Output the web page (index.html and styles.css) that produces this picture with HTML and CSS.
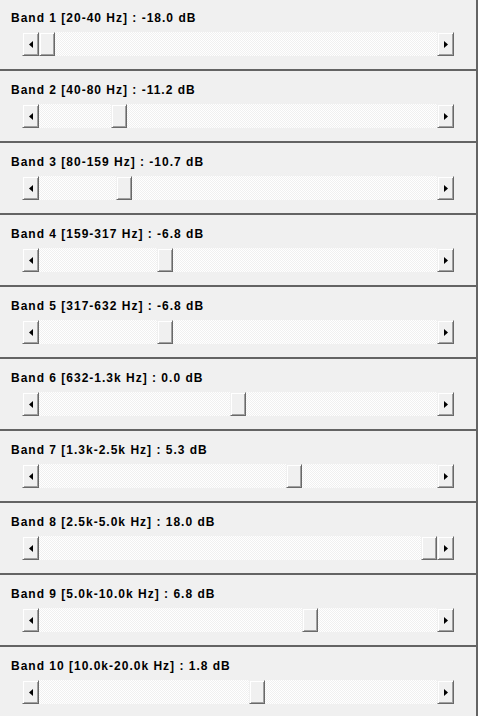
FILE: index.html
```html
<!DOCTYPE html>
<html>
<head>
<meta charset="utf-8">
<link rel="stylesheet" href="styles.css">
</head>
<body>
<div class="panel">
  <div class="band"><div class="label">Band 1 [20-40 Hz] : -18.0 dB</div><div class="sb"><div class="btn"><svg width="4" height="7" viewBox="0 0 4 7"><polygon points="4,0 4,7 0,3.5" fill="#000"/></svg></div><div class="track"><div class="thumb" style="margin-left:0px"></div></div><div class="btn"><svg width="4" height="7" viewBox="0 0 4 7"><polygon points="0,0 0,7 4,3.5" fill="#000"/></svg></div></div></div>
  <div class="band"><div class="label">Band 2 [40-80 Hz] : -11.2 dB</div><div class="sb"><div class="btn"><svg width="4" height="7" viewBox="0 0 4 7"><polygon points="4,0 4,7 0,3.5" fill="#000"/></svg></div><div class="track"><div class="thumb" style="margin-left:72px"></div></div><div class="btn"><svg width="4" height="7" viewBox="0 0 4 7"><polygon points="0,0 0,7 4,3.5" fill="#000"/></svg></div></div></div>
  <div class="band"><div class="label">Band 3 [80-159 Hz] : -10.7 dB</div><div class="sb"><div class="btn"><svg width="4" height="7" viewBox="0 0 4 7"><polygon points="4,0 4,7 0,3.5" fill="#000"/></svg></div><div class="track"><div class="thumb" style="margin-left:77px"></div></div><div class="btn"><svg width="4" height="7" viewBox="0 0 4 7"><polygon points="0,0 0,7 4,3.5" fill="#000"/></svg></div></div></div>
  <div class="band"><div class="label">Band 4 [159-317 Hz] : -6.8 dB</div><div class="sb"><div class="btn"><svg width="4" height="7" viewBox="0 0 4 7"><polygon points="4,0 4,7 0,3.5" fill="#000"/></svg></div><div class="track"><div class="thumb" style="margin-left:118px"></div></div><div class="btn"><svg width="4" height="7" viewBox="0 0 4 7"><polygon points="0,0 0,7 4,3.5" fill="#000"/></svg></div></div></div>
  <div class="band"><div class="label">Band 5 [317-632 Hz] : -6.8 dB</div><div class="sb"><div class="btn"><svg width="4" height="7" viewBox="0 0 4 7"><polygon points="4,0 4,7 0,3.5" fill="#000"/></svg></div><div class="track"><div class="thumb" style="margin-left:118px"></div></div><div class="btn"><svg width="4" height="7" viewBox="0 0 4 7"><polygon points="0,0 0,7 4,3.5" fill="#000"/></svg></div></div></div>
  <div class="band"><div class="label">Band 6 [632-1.3k Hz] : 0.0 dB</div><div class="sb"><div class="btn"><svg width="4" height="7" viewBox="0 0 4 7"><polygon points="4,0 4,7 0,3.5" fill="#000"/></svg></div><div class="track"><div class="thumb" style="margin-left:191px"></div></div><div class="btn"><svg width="4" height="7" viewBox="0 0 4 7"><polygon points="0,0 0,7 4,3.5" fill="#000"/></svg></div></div></div>
  <div class="band"><div class="label">Band 7 [1.3k-2.5k Hz] : 5.3 dB</div><div class="sb"><div class="btn"><svg width="4" height="7" viewBox="0 0 4 7"><polygon points="4,0 4,7 0,3.5" fill="#000"/></svg></div><div class="track"><div class="thumb" style="margin-left:247px"></div></div><div class="btn"><svg width="4" height="7" viewBox="0 0 4 7"><polygon points="0,0 0,7 4,3.5" fill="#000"/></svg></div></div></div>
  <div class="band"><div class="label">Band 8 [2.5k-5.0k Hz] : 18.0 dB</div><div class="sb"><div class="btn"><svg width="4" height="7" viewBox="0 0 4 7"><polygon points="4,0 4,7 0,3.5" fill="#000"/></svg></div><div class="track"><div class="thumb" style="margin-left:382px"></div></div><div class="btn"><svg width="4" height="7" viewBox="0 0 4 7"><polygon points="0,0 0,7 4,3.5" fill="#000"/></svg></div></div></div>
  <div class="band"><div class="label">Band 9 [5.0k-10.0k Hz] : 6.8 dB</div><div class="sb"><div class="btn"><svg width="4" height="7" viewBox="0 0 4 7"><polygon points="4,0 4,7 0,3.5" fill="#000"/></svg></div><div class="track"><div class="thumb" style="margin-left:263px"></div></div><div class="btn"><svg width="4" height="7" viewBox="0 0 4 7"><polygon points="0,0 0,7 4,3.5" fill="#000"/></svg></div></div></div>
  <div class="band"><div class="label">Band 10 [10.0k-20.0k Hz] : 1.8 dB</div><div class="sb"><div class="btn"><svg width="4" height="7" viewBox="0 0 4 7"><polygon points="4,0 4,7 0,3.5" fill="#000"/></svg></div><div class="track"><div class="thumb" style="margin-left:210px"></div></div><div class="btn"><svg width="4" height="7" viewBox="0 0 4 7"><polygon points="0,0 0,7 4,3.5" fill="#000"/></svg></div></div></div>
</div>
</body>
</html>
```
FILE: styles.css
```css
html, body {
  margin: 0;
  padding: 0;
  background: #f0f0f0;
}
body {
  width: 478px;
  height: 716px;
  overflow: hidden;
}
.panel {
  width: 476px;
  height: 716px;
  border-right: 2px solid #646464;
  display: flex;
  flex-direction: column;
  font-family: "Liberation Sans", Arial, sans-serif;
  font-weight: bold;
  font-size: 12px;
  letter-spacing: 1px;
  color: #000;
}
.band {
  height: 70px;
  flex: none;
  box-sizing: content-box;
  border-bottom: 2px solid #646464;
  padding-left: 11px;
  display: flex;
  flex-direction: column;
}
.band:first-child {
  height: 69px;
}
.band:first-child .label {
  padding-top: 11px;
}
.band:last-child {
  border-bottom: none;
}
.label {
  padding-top: 12px;
  line-height: 14px;
  height: 14px;
  white-space: nowrap;
}
.sb {
  margin-top: 7px;
  margin-left: 11px;
  width: 432px;
  height: 24px;
  display: flex;
}
.btn, .thumb {
  width: 17px;
  height: 24px;
  box-sizing: border-box;
  background: #f0f0f0;
  border-top: 1px solid #f0f0f0;
  border-left: 1px solid #f0f0f0;
  border-right: 1px solid #696969;
  border-bottom: 1px solid #696969;
  box-shadow: inset 1px 1px 0 #ffffff, inset -1px -1px 0 #a0a0a0;
  display: flex;
  align-items: center;
  justify-content: center;
  flex: none;
}
.thumb {
  width: 16px;
}
.track {
  flex: 1;
  display: flex;
  background-color: #ffffff;
  background-image: repeating-conic-gradient(#f0f0f0 0 25%, #ffffff 0 50%);
  background-size: 2px 2px;
}
```
